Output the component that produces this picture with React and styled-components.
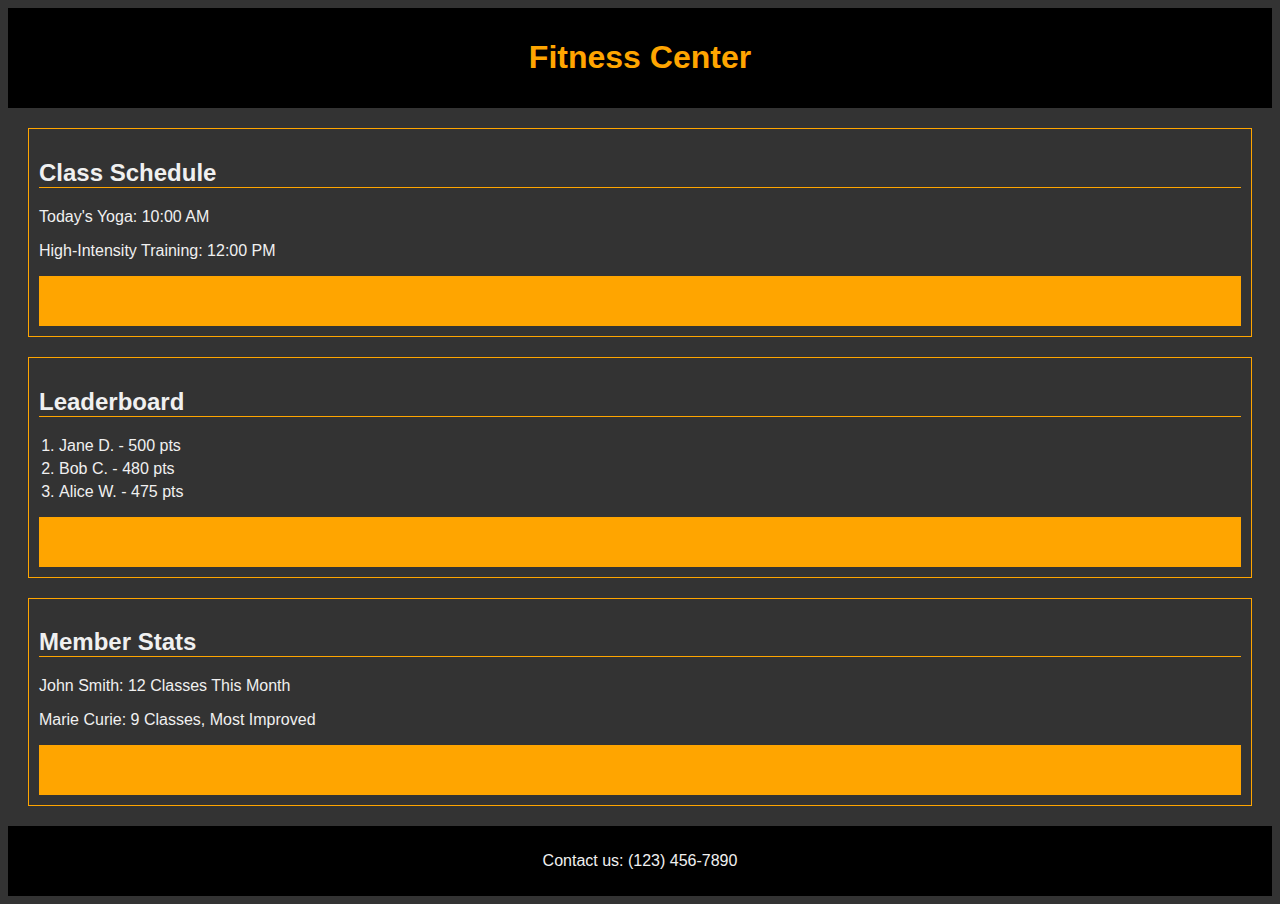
import React from "react";
import styled, {createGlobalStyle} from "styled-components";

const GlobalStyle = createGlobalStyle`
  body {
    margin: 8px;
    background-color: #333333;
    color: #f0f0f0;
    font-family: "Liberation Sans", Arial, sans-serif;
  }
`;

const Header = styled.header`
  background-color: #000;
  padding: 10px;
  text-align: center;
`;

const Title = styled.h1`
  color: #ffa500;
  font-size: 32px;
  margin: 21.44px 0;
`;

const Section = styled.section`
  margin: 20px;
  padding: 10px;
  border: 1px solid #ffa500;
`;

const SectionTitle = styled.h2`
  font-size: 24px;
  margin: 19.92px 0;
  border-bottom: 1px solid #ffa500;
`;

const Line = styled.p`
  margin: 16px 0;
`;

const Ranking = styled.ol`
  margin: 16px 0;
  padding-left: 20px;
`;

const RankItem = styled.li`
  margin: 5px 0;
`;

const Banner = styled.div`
  height: 50px;
  background-color: #ffa500;
`;

const Footer = styled.footer`
  background-color: #000;
  padding: 10px;
  text-align: center;
`;

const sections = [
  {
    title: "Class Schedule",
    lines: ["Today's Yoga: 10:00 AM", "High-Intensity Training: 12:00 PM"],
  },
  {
    title: "Leaderboard",
    ranks: ["Jane D. - 500 pts", "Bob C. - 480 pts", "Alice W. - 475 pts"],
  },
  {
    title: "Member Stats",
    lines: ["John Smith: 12 Classes This Month", "Marie Curie: 9 Classes, Most Improved"],
  },
];

export default function App() {
  return (
    <>
      <GlobalStyle />
      <Header>
        <Title>Fitness Center</Title>
      </Header>
      {sections.map(section => (
        <Section key={section.title}>
          <SectionTitle>{section.title}</SectionTitle>
          {section.lines && section.lines.map(line => <Line key={line}>{line}</Line>)}
          {section.ranks && (
            <Ranking>
              {section.ranks.map(rank => (
                <RankItem key={rank}>{rank}</RankItem>
              ))}
            </Ranking>
          )}
          <Banner />
        </Section>
      ))}
      <Footer>
        <Line>Contact us: (123) 456-7890</Line>
      </Footer>
    </>
  );
}
